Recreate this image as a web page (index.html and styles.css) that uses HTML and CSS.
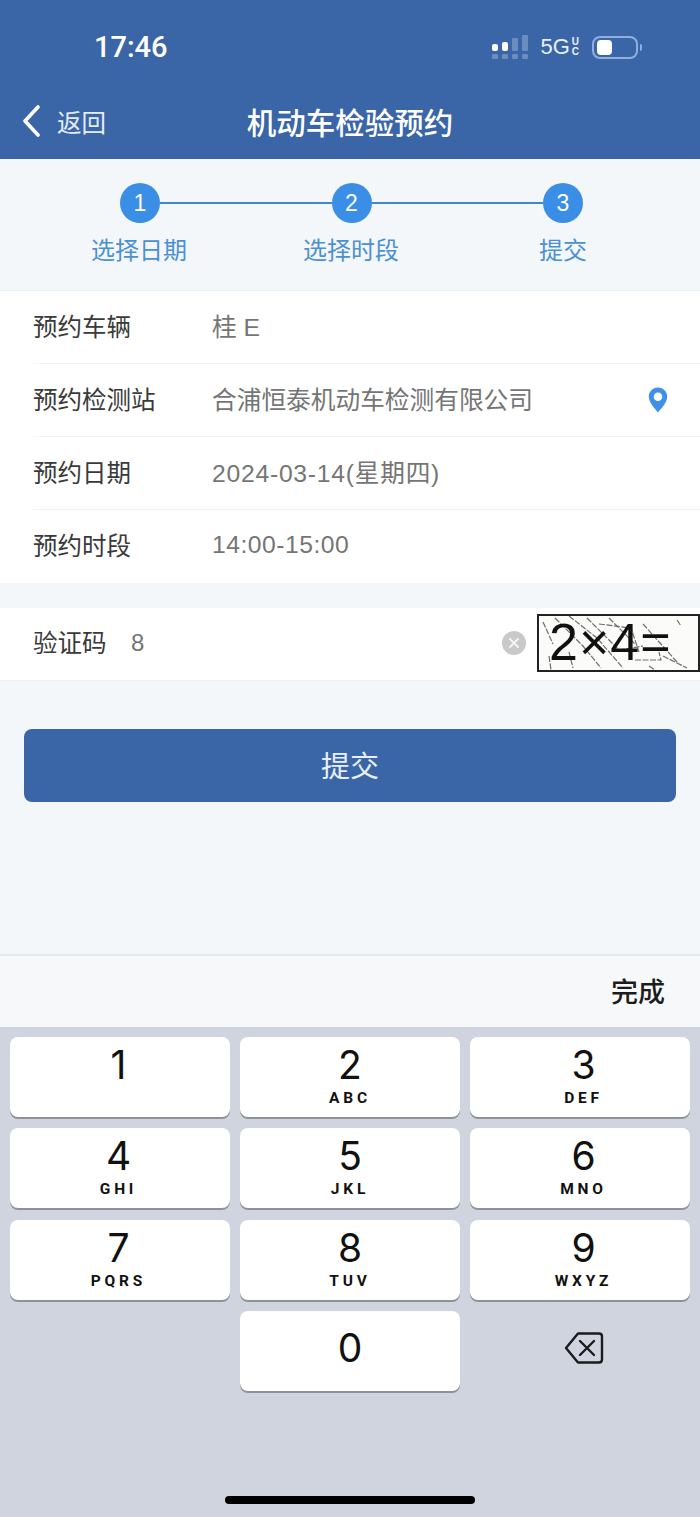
FILE: index.html
```html
<!DOCTYPE html>
<html lang="zh-CN">

<head>
  <meta charset="UTF-8">
  <meta name="viewport" content="width=device-width, initial-scale=1.0">
  <title>机动车检验预约</title>
  <link rel="stylesheet" href="styles.css">
</head>

<body>
  <div class="page">
    <header class="header">
      <div class="status">
        <span class="time">17:46</span>
        <div class="status-right">
          <svg class="signal" width="38" height="24" viewBox="0 0 38 24">
            <g fill="#fff">
              <rect x="1" y="9" width="6" height="7" rx="2"/>
              <rect x="11" y="7" width="6" height="9" rx="2"/>
              <rect x="21" y="3" width="6" height="13" rx="1" opacity=".25"/>
              <rect x="31" y="0" width="6" height="16" rx="1" opacity=".25"/>
              <rect x="1" y="19" width="6" height="5" rx="1" opacity=".25"/>
              <rect x="11" y="19" width="6" height="5" rx="1" opacity=".25"/>
              <rect x="21" y="19" width="6" height="5" rx="1" opacity=".25"/>
              <rect x="31" y="19" width="6" height="5" rx="1" opacity=".25"/>
            </g>
          </svg>
          <span class="net">5G<span class="net-uc">U<br>C</span></span>
          <div class="battery"><div class="battery-fill"></div></div>
          <div class="battery-nub"></div>
        </div>
      </div>
      <nav class="nav">
        <div class="back">
          <svg width="18" height="32" viewBox="0 0 18 32">
            <path d="M16 2 L3 16 L16 30" fill="none" stroke="#fff" stroke-width="3.6" stroke-linecap="round" stroke-linejoin="round"/>
          </svg>
          <span>返回</span>
        </div>
        <h1 class="title">机动车检验预约</h1>
        <div></div>
      </nav>
    </header>

    <section class="steps">
      <div class="step-track">
        <span class="step-dot">1</span>
        <span class="step-line"></span>
        <span class="step-dot">2</span>
        <span class="step-line"></span>
        <span class="step-dot">3</span>
      </div>
      <div class="step-labels">
        <span>选择日期</span>
        <span>选择时段</span>
        <span>提交</span>
      </div>
    </section>

    <section class="form">
      <div class="row">
        <span class="label">预约车辆</span>
        <span class="value">桂 E</span>
      </div>
      <div class="row">
        <span class="label">预约检测站</span>
        <span class="value">合浦恒泰机动车检测有限公司</span>
        <svg class="pin" width="20" height="26" viewBox="0 0 20 26">
          <path fill-rule="evenodd" fill="#3f90e8" d="M10 0.5 C4.8 0.5 0.8 4.5 0.8 9.6 C0.8 15.5 6.5 21.5 10 25.5 C13.5 21.5 19.2 15.5 19.2 9.6 C19.2 4.5 15.2 0.5 10 0.5 Z M10 5.4 A4.3 4.3 0 1 1 10 14 A4.3 4.3 0 1 1 10 5.4 Z"/>
        </svg>
      </div>
      <div class="row">
        <span class="label">预约日期</span>
        <span class="value date">2024-03-14(星期四)</span>
      </div>
      <div class="row">
        <span class="label">预约时段</span>
        <span class="value number">14:00-15:00</span>
      </div>
    </section>

    <section class="captcha-row">
      <span class="label captcha-label">验证码</span>
      <span class="captcha-input">8</span>
      <svg class="clear" width="24" height="24" viewBox="0 0 24 24">
        <circle cx="12" cy="12" r="12" fill="#c9c9c9"/>
        <path d="M8 8 L16 16 M16 8 L8 16" stroke="#f4f4f4" stroke-width="2" stroke-linecap="round"/>
      </svg>
      <div class="captcha">
        <svg class="captcha-noise" width="159" height="54" viewBox="0 0 159 54">
          <g fill="none" stroke="#6f6f68" stroke-width="1.2" stroke-dasharray="6 1.5">
            <path d="M4 6 L14 28"/>
            <path d="M16 2 L44 30 L62 52"/>
            <path d="M30 0 L58 22 L84 52"/>
            <path d="M48 2 L80 34 L104 30"/>
            <path d="M60 8 L92 12 L100 36"/>
            <path d="M70 2 L96 28"/>
            <path d="M104 8 L138 46"/>
            <path d="M124 40 L148 52"/>
            <path d="M10 40 L12 54"/>
            <path d="M96 44 L122 44 L120 36"/>
            <path d="M138 4 L142 10"/>
            <path d="M30 36 L34 52"/>
            <path d="M110 50 L116 54"/>
          </g>
        </svg>
        <span class="captcha-text">2×4=</span>
      </div>
    </section>

    <main class="content">
      <button class="submit">提交</button>
    </main>

    <div class="toolbar"><span class="done">完成</span></div>

    <section class="keyboard">
      <div class="keys">
        <div class="key"><span class="digit">1</span><span class="letters">&nbsp;</span></div>
        <div class="key"><span class="digit">2</span><span class="letters">ABC</span></div>
        <div class="key"><span class="digit">3</span><span class="letters">DEF</span></div>
        <div class="key"><span class="digit">4</span><span class="letters">GHI</span></div>
        <div class="key"><span class="digit">5</span><span class="letters">JKL</span></div>
        <div class="key"><span class="digit">6</span><span class="letters">MNO</span></div>
        <div class="key"><span class="digit">7</span><span class="letters">PQRS</span></div>
        <div class="key"><span class="digit">8</span><span class="letters">TUV</span></div>
        <div class="key"><span class="digit">9</span><span class="letters">WXYZ</span></div>
        <div></div>
        <div class="key key-zero"><span class="digit">0</span></div>
        <div class="key-delete">
          <svg width="40" height="34" viewBox="0 0 40 34">
            <path d="M14 2.5 H35 Q38 2.5 38 5.5 V28.5 Q38 31.5 35 31.5 H14 L2 17 Z" fill="none" stroke="#1b1b1d" stroke-width="2.4" stroke-linejoin="round"/>
            <path d="M16 10 L30 24 M30 10 L16 24" stroke="#1b1b1d" stroke-width="2.4" stroke-linecap="round"/>
          </svg>
        </div>
      </div>
      <div class="home-bar"></div>
    </section>
  </div>
</body>

</html>
```

FILE: styles.css
```css
* {
  box-sizing: border-box;
}

body {
  margin: 0;
  font-family: "Liberation Sans", "Noto Sans CJK SC", sans-serif;
  background: #f3f7fa;
}

.page {
  width: 700px;
  height: 1517px;
  display: flex;
  flex-direction: column;
  overflow: hidden;
}

/* header */
.header {
  height: 159px;
  background: #3a66a8;
  color: #fff;
}

.status {
  height: 94px;
  display: flex;
  align-items: center;
  justify-content: space-between;
  padding: 0 58px 0 94px;
}

.time {
  font-family: Roboto, sans-serif;
  font-size: 29px;
  font-weight: 500;
}

.status-right {
  display: flex;
  align-items: center;
}

.signal {
  margin-right: 11px;
}

.net {
  display: flex;
  align-items: center;
  font-size: 22px;
  color: #e9f0f8;
}

.net-uc {
  font-size: 10px;
  font-weight: 700;
  line-height: 10px;
  margin-left: 2px;
  text-align: center;
}

.battery {
  width: 46px;
  height: 23px;
  margin-left: 13px;
  padding: 2px 3px;
  border: 2px solid #8fb0dc;
  border-radius: 8px;
}

.battery-fill {
  width: 15px;
  height: 100%;
  background: #fff;
  border-radius: 4px;
}

.battery-nub {
  width: 2px;
  height: 7px;
  margin-left: 2px;
  background: #8fb0dc;
  border-radius: 0 2px 2px 0;
}

.nav {
  height: 65px;
  padding: 0 22px 11px;
  display: grid;
  grid-template-columns: 1fr auto 1fr;
  align-items: center;
}

.back {
  display: flex;
  align-items: center;
  gap: 17px;
  font-size: 24.5px;
  color: #e4ecf6;
}

.title {
  margin: 0;
  font-size: 29.5px;
  font-weight: 500;
}

/* steps */
.steps {
  height: 131px;
  padding-top: 24px;
  background: #f3f7fa;
}

.step-track {
  display: flex;
  align-items: center;
  padding: 0 117px 0 120px;
}

.step-dot {
  width: 40px;
  height: 40px;
  flex: none;
  border-radius: 50%;
  background: #3b8ee6;
  color: #fff;
  font-size: 23px;
  line-height: 40px;
  text-align: center;
}

.step-line {
  flex: 1;
  height: 2px;
  background: #3f87cf;
}

.step-labels {
  display: grid;
  grid-template-columns: repeat(3, 212px);
  padding-left: 33px;
  margin-top: 8px;
  font-size: 24px;
  color: #4a90d2;
  text-align: center;
}

/* form */
.form {
  background: #fff;
  border-top: 1px solid #eef1f4;
  padding-left: 33px;
}

.row {
  height: 73px;
  display: flex;
  align-items: center;
  border-bottom: 1px solid #f1f3f5;
}

.row:last-child {
  border-bottom: 0;
}

.label {
  width: 179px;
  flex: none;
  padding-bottom: 4px;
  font-size: 24.5px;
  color: #3a3a3a;
}

.value {
  padding-bottom: 4px;
  font-size: 24.7px;
  color: #757575;
}

.number {
  letter-spacing: .5px;
}

.date {
  letter-spacing: .75px;
}

.pin {
  margin-left: auto;
  margin-right: 32px;
}

.captcha-row {
  height: 73px;
  margin-top: 25px;
  padding: 0 0 2px 33px;
  display: flex;
  align-items: center;
  background: #fff;
  border-bottom: 1px solid #eef1f4;
}

.captcha-label {
  width: 98px;
}

.captcha-input {
  font-size: 24px;
  color: #757575;
}

.clear {
  margin-left: auto;
  margin-right: 11px;
}

.captcha {
  position: relative;
  width: 163px;
  height: 58px;
  padding-left: 10px;
  border: 2px solid #222;
  background: #fbfbf9;
}

.captcha-noise {
  position: absolute;
  left: 0;
  top: 0;
}

.captcha-text {
  position: relative;
  font-size: 52px;
  line-height: 52px;
  letter-spacing: 1px;
  color: #111;
}

/* submit */
.content {
  flex: 1;
  padding: 48px 24px 0;
}

.submit {
  display: block;
  width: 100%;
  height: 73px;
  padding: 0 0 4px;
  border: 0;
  border-radius: 8px;
  background: #3a66a8;
  color: #e9eff7;
  font-family: inherit;
  font-size: 29px;
}

/* keyboard */
.toolbar {
  height: 73px;
  padding: 0 35px 2px 0;
  display: flex;
  align-items: center;
  justify-content: flex-end;
  background: #f7f8f9;
  border-top: 2px solid #e6e8ea;
}

.done {
  font-size: 27px;
  font-weight: 500;
  color: #1c1c1c;
}

.keyboard {
  height: 490px;
  padding: 10px 10px 0;
  display: flex;
  flex-direction: column;
  background: #d0d4df;
}

.keys {
  display: grid;
  grid-template-columns: repeat(3, 220px);
  grid-auto-rows: 80px;
  column-gap: 10px;
  row-gap: 11.3px;
}

.key {
  display: flex;
  flex-direction: column;
  align-items: center;
  padding-top: 6px;
  background: #fff;
  border-radius: 8px;
  box-shadow: 0 2px 0 #8f9197;
  color: #111;
}

.key:nth-child(3n) {
  padding-left: 7px;
}

.key:nth-child(3n+1) {
  padding-right: 3px;
}

.key-zero {
  justify-content: center;
  padding: 0 0 6px;
}

.digit {
  font-family: Inter, sans-serif;
  font-size: 39px;
  line-height: 44px;
}

.letters {
  font-family: Roboto, sans-serif;
  font-size: 15.5px;
  font-weight: 700;
  line-height: 20px;
  letter-spacing: 3.8px;
  margin-top: 1px;
}

.key-delete {
  display: flex;
  align-items: center;
  justify-content: center;
  padding: 0 0 6px 8px;
}

.home-bar {
  width: 250px;
  height: 8px;
  margin: auto auto 13px;
  border-radius: 4px;
  background: #000;
}
```
